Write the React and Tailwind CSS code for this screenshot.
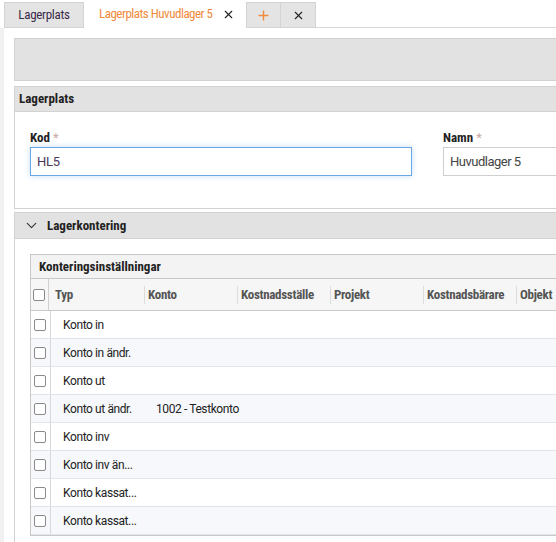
import { ChevronDown, X, Plus } from 'lucide-react'

const narrow = "font-['Liberation_Sans_Narrow','Roboto_Condensed','Roboto',sans-serif]"

const rows = [
  { typ: 'Konto in', konto: '' },
  { typ: 'Konto in ändr.', konto: '' },
  { typ: 'Konto ut', konto: '' },
  { typ: 'Konto ut ändr.', konto: '1002 - Testkonto' },
  { typ: 'Konto inv', konto: '' },
  { typ: 'Konto inv än...', konto: '' },
  { typ: 'Konto kassat...', konto: '' },
  { typ: 'Konto kassat...', konto: '' },
]

const cols = ['Konto', 'Kostnadsställe', 'Projekt', 'Kostnadsbärare', 'Objekt']

function Box() {
  return <span className="block w-3 h-3 border border-[#8a8a8a] rounded-[2px] bg-white" />
}

export default function App() {
  return (
    <div className="w-[556px] h-[542px] overflow-hidden bg-[#f1f1f1] font-['Roboto',sans-serif]">
      {/* tabs */}
      <div className="flex h-7 pl-1 bg-white">
        <div className={`w-20 shrink-0 mt-0.5 flex items-center justify-center bg-[#e4e4e4] border border-[#d4d4d4] text-[13px] tracking-[-0.3px] text-[#3a2a4a] ${narrow}`}>
          Lagerplats
        </div>
        <div className={`w-[162px] shrink-0 flex items-center pl-[15px] gap-[10px] bg-white text-[13px] tracking-[-0.5px] text-[#f08a3c] ${narrow}`}>
          Lagerplats Huvudlager 5
          <X size={13} strokeWidth={2} className="text-[#222]" />
        </div>
        <div className="w-[35px] shrink-0 mt-0.5 flex items-center justify-center bg-[#e4e4e4] border border-[#d4d4d4]">
          <Plus size={15} strokeWidth={2.2} color="#f08a3c" />
        </div>
        <div className="w-[35px] shrink-0 mt-0.5 flex items-center justify-center bg-[#e4e4e4] border border-l-0 border-[#d4d4d4]">
          <X size={13} strokeWidth={2} className="text-[#222]" />
        </div>
        <div className="flex-1 border-b border-[#d8d8d8]" />
      </div>

      {/* content */}
      <div className="ml-1 w-[620px] bg-white pl-2.5 pt-2.5">
        <div className="h-[43px] bg-[#e2e2e2] border border-[#d2d2d2]" />

        <div className="mt-[5px] border border-[#d2d2d2]">
          <div className={`h-[25px] flex items-center pl-1 bg-[#e2e2e2] border-b border-[#d2d2d2] text-[13px] font-bold text-[#222] ${narrow}`}>
            Lagerplats
          </div>
          <div className="flex gap-[31px] pl-[15px] pt-[18px] pb-[32px]">
            <div className="flex flex-col gap-px">
              <label className={`text-[13px] leading-4 font-bold text-[#222] ${narrow}`}>
                Kod <span className="text-[#c9a7a7] font-normal">*</span>
              </label>
              <div className="w-[382px] h-[29px] flex items-center pl-1.5 border border-[#6aa7e6] shadow-[0_0_6px_rgba(90,160,230,0.35)] text-[13px] tracking-[-0.3px] text-[#4a3a5a]">
                HL5
              </div>
            </div>
            <div className="flex flex-col gap-px">
              <label className={`text-[13px] leading-4 font-bold text-[#222] ${narrow}`}>
                Namn <span className="text-[#c9a7a7] font-normal">*</span>
              </label>
              <div className="w-[160px] h-[29px] flex items-center pl-1.5 border border-[#cfcfcf] text-[13px] tracking-[-0.5px] text-[#444]">
                Huvudlager 5
              </div>
            </div>
          </div>
        </div>

        <div className="mt-[3px] border border-b-0 border-[#d2d2d2]">
          <div className={`h-[26px] flex items-center gap-[7px] pl-[8px] bg-[#e2e2e2] border-b border-[#d2d2d2] text-[13px] font-bold text-[#222] ${narrow}`}>
            <ChevronDown size={17} strokeWidth={1.6} className="text-[#333]" />
            Lagerkontering
          </div>
          <div className="pl-[15px] pt-[15px] pb-[10px]">
            <div className="border border-[#c8c8c8]">
              <div className={`h-6 flex items-center pl-2 bg-[#f3f3f3] border-b border-[#c8c8c8] text-[13px] font-bold text-[#222] ${narrow}`}>
                Konteringsinställningar
              </div>
              <div className={`h-8 flex items-center bg-[#f6f6f6] border-b border-[#c8c8c8] text-[13px] tracking-[-0.3px] font-bold text-[#555] ${narrow}`}>
                <div className="w-[18px] shrink-0 h-full flex items-center border-r border-[#d0d0d0] pl-[2px]">
                  <Box />
                </div>
                <div className="w-[95px] shrink-0 pl-1.5">Typ</div>
                {cols.map((c) => (
                  <div key={c} className="w-[93px] shrink-0 flex items-center">
                    <span className="w-px h-[18px] bg-[#dcdcdc]" />
                    <span className="pl-[3px]">{c}</span>
                  </div>
                ))}
              </div>
              {rows.map((r, i) => (
                <div
                  key={i}
                  className={`h-7 grid grid-cols-[20px_105px_1fr] items-center text-[12px] tracking-[-0.4px] text-[#222] border-b border-[#e1e4ea] ${i % 2 === 1 ? 'bg-[#f6f8fb]' : 'bg-white'}`}
                >
                  <div className="h-full flex items-center border-r border-[#d8d8d8] pl-[3px]">
                    <Box />
                  </div>
                  <div className="pl-[12px] whitespace-nowrap">{r.typ}</div>
                  <div className="whitespace-nowrap">{r.konto}</div>
                </div>
              ))}
            </div>
          </div>
        </div>
      </div>
    </div>
  )
}
